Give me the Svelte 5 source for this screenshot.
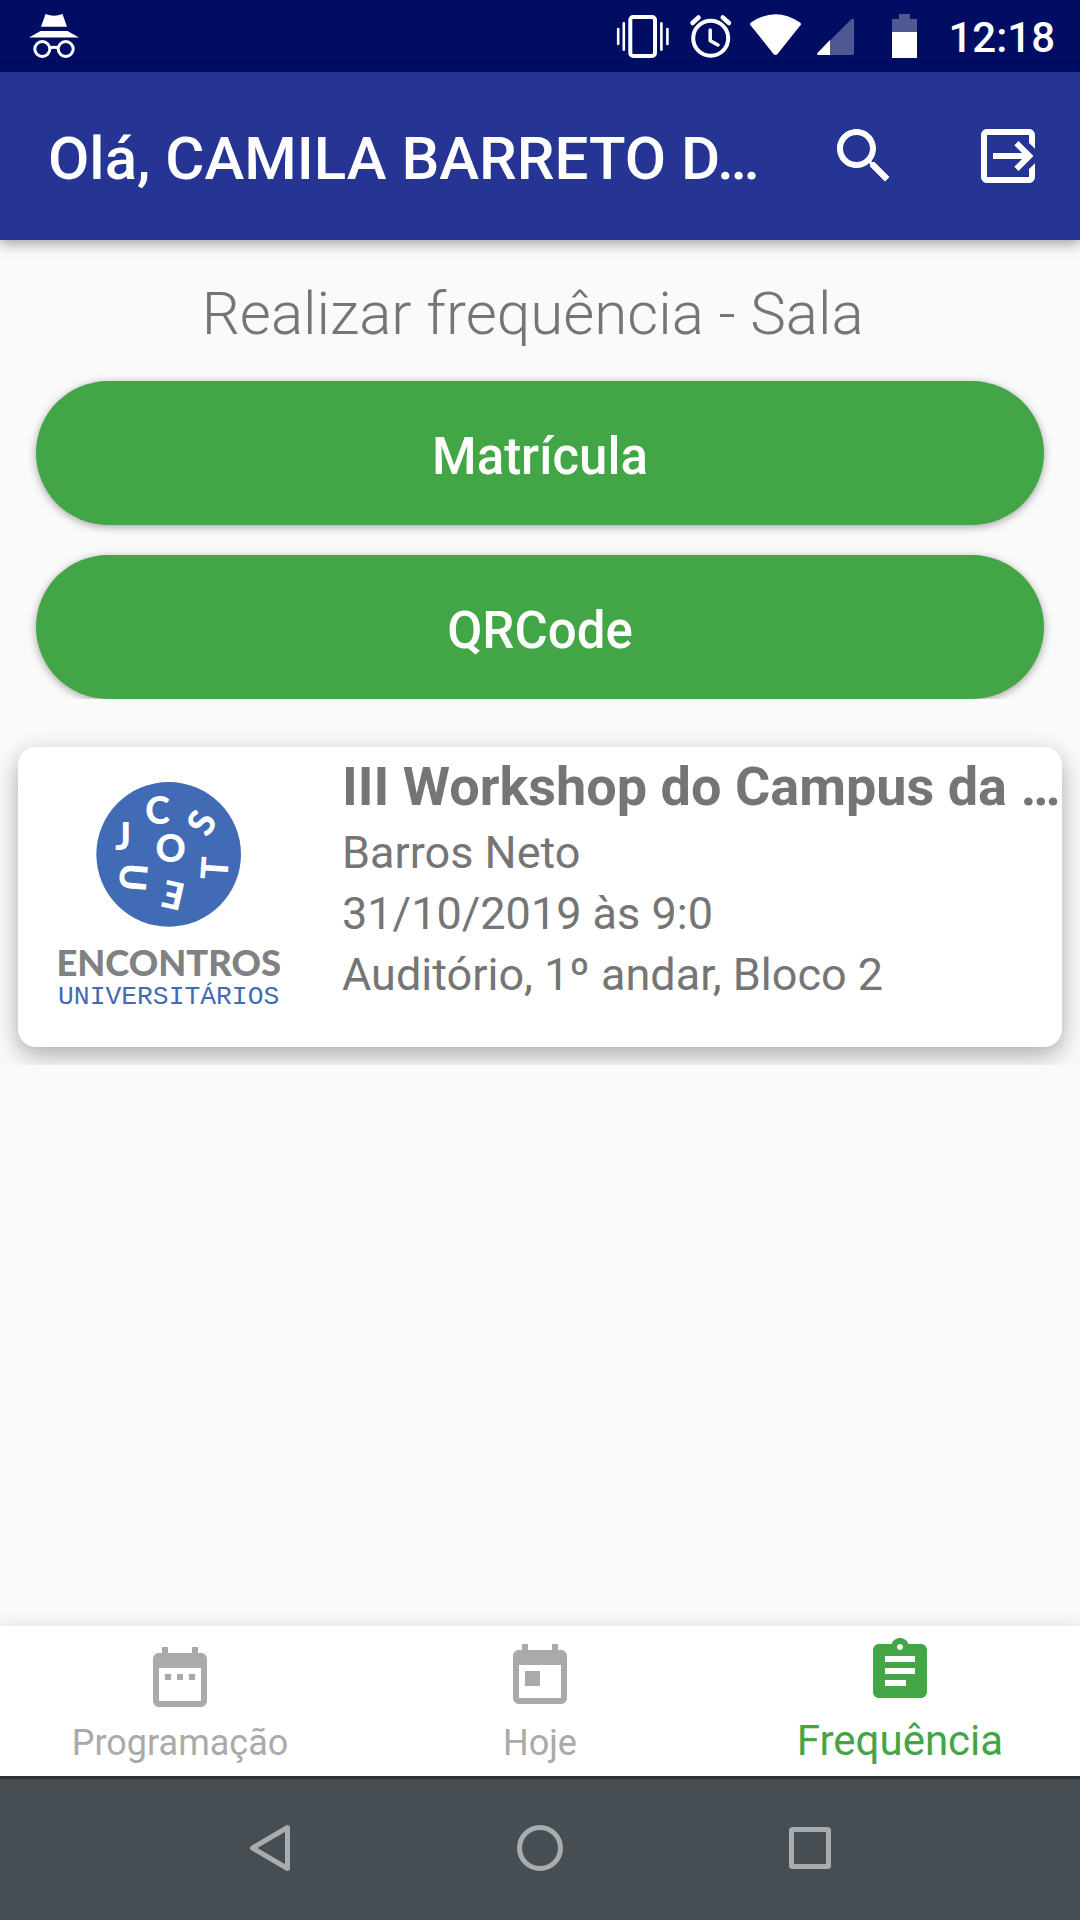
<script>
  const tabs = [
    {
      label: 'Programação',
      active: false,
      path: 'M9 11H7v2h2v-2zm4 0h-2v2h2v-2zm4 0h-2v2h2v-2zm2-7h-1V2h-2v2H8V2H6v2H5c-1.11 0-2 .9-2 2v14c0 1.1.89 2 2 2h14c1.1 0 2-.9 2-2V6c0-1.1-.9-2-2-2zm0 16H5V9h14v11z',
    },
    {
      label: 'Hoje',
      active: false,
      path: 'M19 3h-1V1h-2v2H8V1H6v2H5c-1.11 0-2 .9-2 2v14c0 1.1.89 2 2 2h14c1.1 0 2-.9 2-2V5c0-1.1-.9-2-2-2zm0 16H5V8h14v11zM7 10h5v5H7z',
    },
    {
      label: 'Frequência',
      active: true,
      path: 'M19 3h-4.18C14.4 1.84 13.3 1 12 1s-2.4.84-2.82 2H5c-1.1 0-2 .9-2 2v14c0 1.1.9 2 2 2h14c1.1 0 2-.9 2-2V5c0-1.1-.9-2-2-2zm-7 0c.55 0 1 .45 1 1s-.45 1-1 1-1-.45-1-1 .45-1 1-1zm2 14H7v-2h7v2zm3-4H7v-2h10v2zm0-4H7V7h10v2z',
    },
  ];

  const sealLetters = [
    { char: 'C', place: 'translate(383 152)' },
    { char: 'S', place: 'translate(515 188) rotate(-60)' },
    { char: 'J', place: 'translate(279 231)' },
    { char: 'O', place: 'translate(422 267)' },
    { char: 'T', place: 'translate(554 325) rotate(-86)' },
    { char: 'U', place: 'translate(309 352) rotate(95)' },
    { char: 'E', place: 'translate(430 405) rotate(193)' },
  ];
</script>

<div class="screen">
  <div class="status">
    <svg width="52" height="72" viewBox="0 0 52 72" fill="#fff" aria-hidden="true">
      <path d="M17.500 14q8.500 3.500 17 0L39 26.700H13z" />
      <path d="M12.500 31h27L51 37.500H1z" />
      <g fill="none" stroke="#fff" stroke-width="3">
        <circle cx="14.300" cy="49" r="7.500" />
        <circle cx="37.700" cy="49" r="7.500" />
        <path d="M21.500 48q4.500-1.500 9 0" />
      </g>
    </svg>
    <div class="indicators">
      <svg width="64" height="72" viewBox="0 0 64 72" aria-hidden="true">
        <rect x="18.300" y="17" width="24.700" height="39" rx="3" fill="none" stroke="#fff" stroke-width="4" />
        <path d="M6.200 29v15M11.800 23.200v26.500M49.400 23.200v26.500M55.400 29v15" stroke="#fff" stroke-width="2.600" stroke-linecap="round" />
      </svg>
      <svg width="66" height="72" viewBox="0 0 66 72" fill="none" stroke="#fff" stroke-width="4" aria-hidden="true">
        <circle cx="34.700" cy="38.300" r="17.500" />
        <path d="M34.200 30v10.700l7.800 4.300" stroke-width="3.500" stroke-linecap="round" stroke-linejoin="round" />
        <path d="M16.500 23l6-5.500M46.700 17.500l6.300 5.500" stroke-width="4.500" stroke-linecap="round" />
      </svg>
      <svg width="68" height="72" viewBox="0 0 68 72" fill="#fff" aria-hidden="true">
        <path d="M8 24.500q0-1.500 1-2Q33.500 6 58 22.500q1 .5 1 2L35.500 54q-2 2-4 0z" />
      </svg>
      <svg width="60" height="72" viewBox="0 0 60 72" aria-hidden="true">
        <path d="M7.500 53L41.500 19q2.500-1 2.500 1v33q0 2-2 2H9q-2.500 0-1.500-2z" fill="#4f5892" />
        <path d="M7.500 53L20 40v15H9q-2.500 0-1.500-2z" fill="#fff" />
      </svg>
      <svg width="66" height="72" viewBox="0 0 66 72" aria-hidden="true">
        <path d="M29 14h11v5h7v13H22V19h7z" fill="#4f5892" />
        <path d="M22 32h25v26H22z" fill="#fff" />
      </svg>
      <time>12:18</time>
    </div>
  </div>

  <header class="appbar">
    <h1>Olá, CAMILA BARRETO D…</h1>
    <button class="action" aria-label="Buscar">
      <svg width="72" height="72" viewBox="0 0 24 24" fill="#fff">
        <path d="M15.500 14h-.79l-.28-.27C15.410 12.590 16 11.110 16 9.500 16 5.910 13.090 3 9.500 3S3 5.910 3 9.500 5.910 16 9.500 16c1.610 0 3.090-.59 4.230-1.570l.27.28v.79l5 4.990L20.490 19l-4.990-5zm-6 0C7.010 14 5 11.990 5 9.500S7.010 5 9.500 5 14 7.010 14 9.500 11.990 14 9.500 14z" />
      </svg>
    </button>
    <button class="action" aria-label="Sair">
      <svg width="72" height="72" viewBox="0 0 24 24" fill="#fff">
        <path d="M21 9.600V5c0-1.100-.9-2-2-2H5c-1.100 0-2 .9-2 2v14c0 1.100.9 2 2 2h14c1.100 0 2-.9 2-2v-4.600l-2 1.900V19H5V5h14v2.700z" />
        <path d="M15.500 7l-1.400 1.400 2.600 2.600H7v2h9.700l-2.600 2.600 1.400 1.400 5-5z" />
      </svg>
    </button>
  </header>

  <main>
    <section class="attendance">
      <h2>Realizar frequência - Sala{' '}</h2>
      <button class="pill">Matrícula</button>
      <button class="pill">QRCode</button>
    </section>

    <section class="events">
      <article class="card">
        <svg class="logo" viewBox="0 0 840 810" role="img" aria-label="Encontros Universitários">
          <circle cx="416" cy="283" r="217" fill="#416bb5" />
          {#each sealLetters as letter}
            <g transform={letter.place}>
              <text class="seal" y="40">{letter.char}</text>
            </g>
          {/each}
          <text class="word" x="416" y="648">ENCONTROS</text>
          <text class="subword" x="416" y="732">UNIVERSITÁRIOS</text>
        </svg>
        <div class="details">
          <h3>III Workshop do Campus da …</h3>
          <p>Barros Neto</p>
          <p>31/10/2019 às 9:0</p>
          <p>Auditório, 1º andar, Bloco 2</p>
        </div>
      </article>
    </section>
  </main>

  <nav class="tabs">
    {#each tabs as tab}
      <button class="tab" class:active={tab.active} aria-current={tab.active ? 'page' : undefined}>
        <svg width="72" height="72" viewBox="0 0 24 24" fill="currentColor" aria-hidden="true">
          <path d={tab.path} />
        </svg>
        <span>{tab.label}</span>
      </button>
    {/each}
  </nav>

  <div class="system">
    <button aria-label="Voltar">
      <svg width="54" height="54" viewBox="0 0 54 54">
        <path d="M44.500 6.500v41L9.500 27z" />
      </svg>
    </button>
    <button aria-label="Início">
      <svg width="54" height="54" viewBox="0 0 54 54">
        <circle cx="27" cy="27" r="20.500" />
      </svg>
    </button>
    <button aria-label="Recentes">
      <svg width="54" height="54" viewBox="0 0 54 54">
        <rect x="8.500" y="8.500" width="37" height="37" rx="1" />
      </svg>
    </button>
  </div>
</div>

<style>
  :global(body) {
    margin: 0;
    background: #fafafa;
  }

  .screen {
    display: flex;
    flex-direction: column;
    min-height: 100vh;
    font-family: Roboto, 'Liberation Sans', sans-serif;
    color: #757575;
  }

  svg {
    display: block;
    flex: none;
  }

  h1,
  h2,
  h3,
  p {
    margin: 0;
  }

  button {
    border: 0;
    padding: 0;
    background: none;
    font: inherit;
    color: inherit;
  }

  .status {
    display: flex;
    justify-content: space-between;
    height: 72px;
    padding: 0 25px 0 28px;
    background: #000d62;
    color: #fff;
  }

  .indicators {
    display: flex;
    align-items: center;
  }

  time {
    padding: 4px 0 0 12px;
    font-size: 42px;
    font-weight: 500;
    line-height: 48px;
  }

  .appbar {
    position: relative;
    display: flex;
    align-items: center;
    height: 168px;
    padding-left: 48px;
    background: #263493;
    color: #fff;
    box-shadow: 0 4px 12px rgba(0, 0, 0, 0.35);
  }

  h1 {
    flex: 1;
    min-width: 0;
    padding-top: 5px;
    overflow: hidden;
    font-size: 60px;
    font-weight: 500;
    line-height: 72px;
    text-overflow: ellipsis;
    white-space: nowrap;
  }

  .action {
    display: grid;
    place-items: center;
    width: 144px;
    height: 144px;
  }

  main {
    flex: 1;
  }

  .attendance {
    display: flex;
    flex-direction: column;
    gap: 30px;
    padding: 38px 36px 0;
    overflow: hidden;
  }

  h2 {
    padding-bottom: 1px;
    font-size: 60px;
    font-weight: 300;
    line-height: 72px;
    text-align: center;
    white-space: pre;
  }

  .pill {
    height: 144px;
    padding-top: 6px;
    border-radius: 72px;
    background: #42a546;
    color: #fff;
    font-size: 51px;
    font-weight: 500;
    box-shadow: 0 2px 8px rgba(0, 0, 0, 0.35);
  }

  .events {
    padding: 48px 18px 18px;
    overflow: hidden;
  }

  .card {
    display: grid;
    grid-template-columns: 324px minmax(0, 1fr);
    height: 300px;
    border-radius: 18px;
    background: #fff;
    box-shadow: 0 8px 24px rgba(0, 0, 0, 0.32);
  }

  .logo {
    width: 280px;
    height: 270px;
    margin: 13px 12px;
  }

  .seal,
  .word,
  .subword {
    text-anchor: middle;
  }

  .seal {
    fill: #fff;
    font-family: Lato, sans-serif;
    font-size: 112px;
    font-weight: 900;
  }

  .word {
    fill: #808184;
    font-family: Lato, sans-serif;
    font-size: 109px;
    font-weight: 900;
  }

  .subword {
    fill: #416bb5;
    font-family: 'Liberation Mono', monospace;
    font-size: 79px;
    font-weight: 400;
  }

  .details {
    padding-top: 8px;
    font-size: 45px;
    line-height: 61px;
  }

  h3 {
    padding-bottom: 4px;
    overflow: hidden;
    font-size: 54px;
    font-weight: 700;
    line-height: 63px;
    white-space: nowrap;
  }

  .tabs {
    display: grid;
    grid-template-columns: repeat(3, 1fr);
    height: 150px;
    background: #fff;
    color: #aaa;
    box-shadow: 0 0 16px rgba(0, 0, 0, 0.12);
  }

  .tab {
    display: flex;
    flex-direction: column;
    align-items: center;
    justify-content: flex-end;
    gap: 9px;
    padding-bottom: 12px;
    font-size: 36px;
    line-height: 42px;
  }

  .tab.active {
    gap: 10px;
    padding-bottom: 11px;
    color: #42a546;
    font-size: 42px;
    line-height: 48px;
  }

  .system {
    position: relative;
    display: flex;
    justify-content: center;
    height: 141px;
    border-top: 3px solid #2e3235;
    background: #464d53;
  }

  .system button {
    display: grid;
    place-items: center;
    width: 25%;
    padding-bottom: 3px;
  }

  .system svg {
    fill: none;
    stroke: #a9acae;
    stroke-width: 5;
    stroke-linejoin: round;
  }
</style>
